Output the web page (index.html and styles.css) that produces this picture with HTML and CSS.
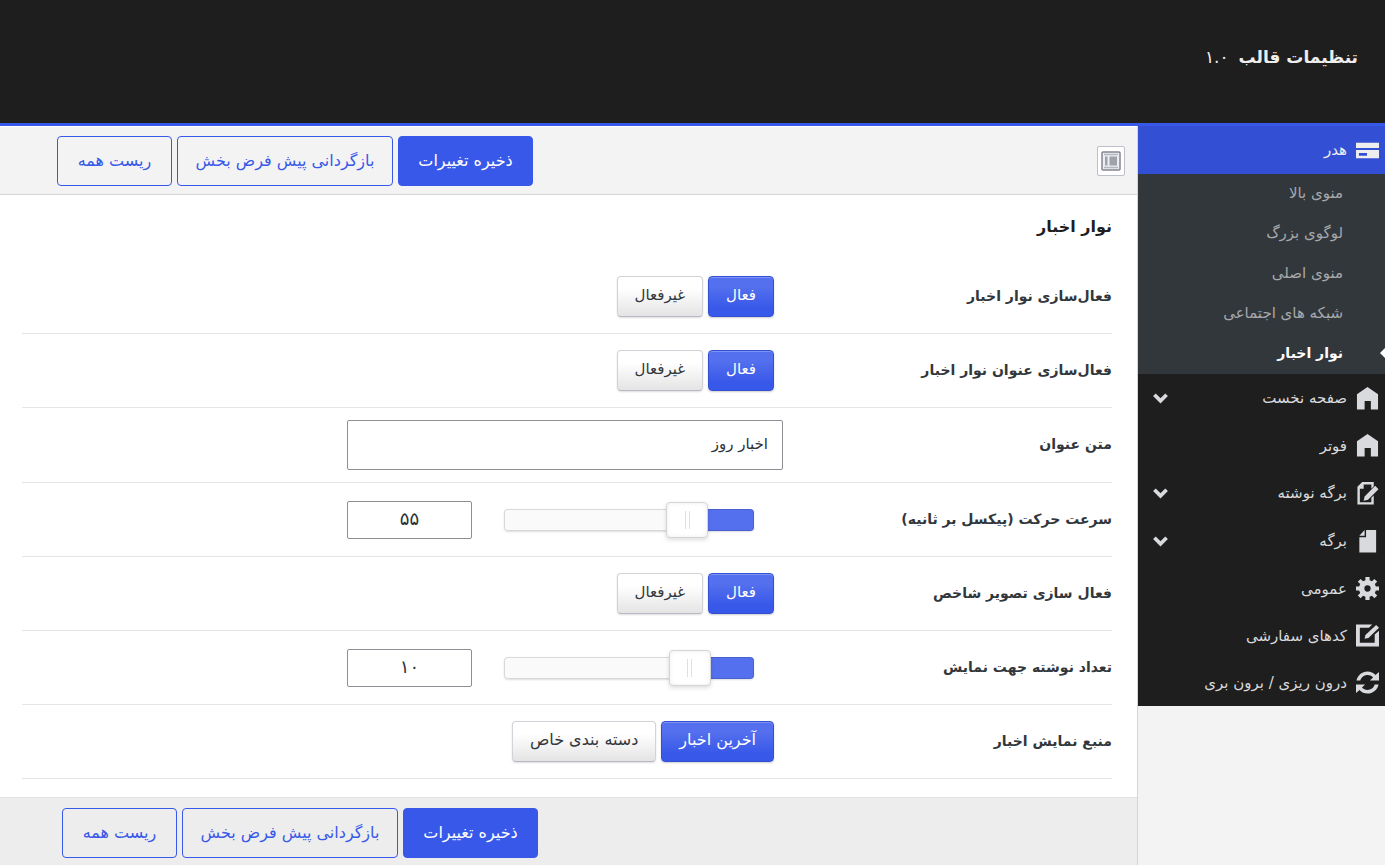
FILE: index.html
```html
<!DOCTYPE html>
<html lang="fa" dir="rtl">
<head>
<meta charset="utf-8">
<meta name="viewport" content="width=device-width, initial-scale=1">
<title>تنظیمات قالب</title>
<link rel="stylesheet" href="styles.css">
</head>
<body>
<header class="page-header">
  <h1 class="page-title">تنظیمات قالب <span class="version">۱.۰</span></h1>
</header>
<div class="layout">
  <nav class="sidebar" aria-label="بخش‌ها">
    <ul class="menu">
      <li>
        <a class="menu-link active" href="#header">
          <svg class="icon" viewBox="0 0 24 24" aria-hidden="true"><path fill-rule="evenodd" d="M0 4h24v5.500H0zM0 11.500h24V20H0zM3 14.500v3h8.500v-3z"/></svg>
          <span>هدر</span>
        </a>
        <ul class="submenu">
          <li><a class="submenu-link" href="#top-menu">منوی بالا</a></li>
          <li><a class="submenu-link" href="#logo">لوگوی بزرگ</a></li>
          <li><a class="submenu-link" href="#main-menu">منوی اصلی</a></li>
          <li><a class="submenu-link" href="#social">شبکه های اجتماعی</a></li>
          <li><a class="submenu-link current" href="#news-bar">نوار اخبار</a></li>
        </ul>
      </li>
      <li>
        <a class="menu-link expandable" href="#home">
          <svg class="icon" viewBox="0 0 24 24" aria-hidden="true"><path d="M12 0l11 7.500V23.500h-7.500V14.500H9v9H1V7.500z"/></svg>
          <span>صفحه نخست</span>
          <svg class="chevron" viewBox="0 0 16 11" aria-hidden="true"><path d="M1.500 1.500L8 8l6.500-6.500"/></svg>
        </a>
      </li>
      <li>
        <a class="menu-link" href="#footer">
          <svg class="icon" viewBox="0 0 24 24" aria-hidden="true"><path d="M12 0l11 7.500V23.500h-7.500V14.500H9v9H1V7.500z"/></svg>
          <span>فوتر</span>
        </a>
      </li>
      <li>
        <a class="menu-link expandable" href="#post">
          <svg class="icon" viewBox="0 0 24 24" aria-hidden="true"><path d="M6.500 0H18.500v4.500l-2.500 2.500V2.500H8V7H4v14h12v-4.500l2.500-2.500v9.500H1.500V5z"/><path d="M20 4l3.500 3.500L12.500 18.500 8 19.500l1-4.500z"/></svg>
          <span>برگه نوشته</span>
          <svg class="chevron" viewBox="0 0 16 11" aria-hidden="true"><path d="M1.500 1.500L8 8l6.500-6.500"/></svg>
        </a>
      </li>
      <li>
        <a class="menu-link expandable" href="#page">
          <svg class="icon" viewBox="0 0 24 24" aria-hidden="true"><path d="M10.500 0H21v23.500H3.500V7.500h7zM9 0v6H3.500z"/></svg>
          <span>برگه</span>
          <svg class="chevron" viewBox="0 0 16 11" aria-hidden="true"><path d="M1.500 1.500L8 8l6.500-6.500"/></svg>
        </a>
      </li>
      <li>
        <a class="menu-link" href="#general">
          <svg class="icon" viewBox="1 1 22 22" aria-hidden="true"><path fill-rule="evenodd" d="M10 1h4v3l2.300 1L18.600 2.800l2.700 2.700L19 7.800l1 2.200h3v4h-3l-1 2.300 2.300 2.300-2.700 2.700L16.300 19 14 20v3h-4v-3l-2.300-1-2.300 2.300-2.700-2.700L5 16.300 4 14H1v-4h3l1-2.200-2.300-2.300 2.700-2.700L7.700 5 10 4zM12 9a3 3 0 1 0 0 6 3 3 0 0 0 0-6z"/></svg>
          <span>عمومی</span>
        </a>
      </li>
      <li>
        <a class="menu-link" href="#custom-code">
          <svg class="icon" viewBox="0 0 24 24" aria-hidden="true"><path d="M0 .5H17L13.500 4H4v15.500h15.500V11L24 7v16.500H0z"/><path d="M21 1l3 3L13 14.500 9 15.500l.8-4z"/></svg>
          <span>کدهای سفارشی</span>
        </a>
      </li>
      <li>
        <a class="menu-link" href="#import-export">
          <svg class="icon" viewBox="0 0 24 24" aria-hidden="true"><path d="M.500 10C1.500 4.500 6.500.5 12 .5c3.300 0 6.300 1.300 8.300 3.700L24 1v9h-9.500l3.300-3.300C16.300 5 14.300 4.300 12 4.300c-3.500 0-6.500 2.200-7.500 5.700zM23.500 14c-1 5.500-6 9.500-11.500 9.500-3.300 0-6.300-1.300-8.300-3.700L0 23v-9h9.500l-3.300 3.300c1.500 1.700 3.500 2.400 5.800 2.400 3.500 0 6.500-2.200 7.500-5.700z"/></svg>
          <span>درون ریزی / برون بری</span>
        </a>
      </li>
    </ul>
  </nav>
  <form class="content">
    <div class="toolbar">
      <button class="expand" type="button" aria-label="نمایش همه">
        <svg viewBox="0 0 20 20" aria-hidden="true"><rect x="1" y="1" width="18" height="18" rx="1" fill="#eceef5" stroke="#85868d" stroke-width="1.500"/><path d="M3 3.500h14M3 16.500h14" stroke="#b5b7c4" stroke-width="1.500"/><path d="M4 5.500h2.500v9H4zM8.500 5.500H16v9H8.500z" fill="#a0a1ab"/></svg>
      </button>
      <div class="actions">
        <button class="button primary" type="submit">ذخیره تغییرات</button>
        <button class="button section-reset" type="button">بازگردانی پیش فرض بخش</button>
        <button class="button" type="reset">ریست همه</button>
      </div>
    </div>
    <main class="panel">
      <h2 class="panel-title">نوار اخبار</h2>
      <div class="row" role="radiogroup" aria-labelledby="l1">
        <span class="row-label" id="l1">فعال‌سازی نوار اخبار</span>
        <div class="choices">
          <label class="choice"><input type="radio" name="bar" checked><span>فعال</span></label>
          <label class="choice"><input type="radio" name="bar"><span>غیرفعال</span></label>
        </div>
      </div>
      <div class="row" role="radiogroup" aria-labelledby="l2">
        <span class="row-label" id="l2">فعال‌سازی عنوان نوار اخبار</span>
        <div class="choices">
          <label class="choice"><input type="radio" name="bar-title" checked><span>فعال</span></label>
          <label class="choice"><input type="radio" name="bar-title"><span>غیرفعال</span></label>
        </div>
      </div>
      <div class="row">
        <label class="row-label" for="title-text">متن عنوان</label>
        <input class="text-input" id="title-text" type="text" value="اخبار روز">
      </div>
      <div class="row">
        <label class="row-label" for="speed">سرعت حرکت (پیکسل بر ثانیه)</label>
        <div class="slider-field">
          <input class="slider" id="speed" type="range" min="0" max="250" value="55" style="--fill: 22%">
          <input class="number-input" type="text" value="۵۵" aria-label="سرعت حرکت">
        </div>
      </div>
      <div class="row" role="radiogroup" aria-labelledby="l5">
        <span class="row-label" id="l5">فعال سازی تصویر شاخص</span>
        <div class="choices">
          <label class="choice"><input type="radio" name="thumb" checked><span>فعال</span></label>
          <label class="choice"><input type="radio" name="thumb"><span>غیرفعال</span></label>
        </div>
      </div>
      <div class="row">
        <label class="row-label" for="count">تعداد نوشته جهت نمایش</label>
        <div class="slider-field">
          <input class="slider" id="count" type="range" min="0" max="48" value="10" style="--fill: 21%">
          <input class="number-input" type="text" value="۱۰" aria-label="تعداد نوشته">
        </div>
      </div>
      <div class="row" role="radiogroup" aria-labelledby="l7">
        <span class="row-label" id="l7">منبع نمایش اخبار</span>
        <div class="choices long">
          <label class="choice"><input type="radio" name="source" checked><span>آخرین اخبار</span></label>
          <label class="choice"><input type="radio" name="source"><span>دسته بندی خاص</span></label>
        </div>
      </div>
    </main>
    <div class="toolbar bottom">
      <div class="actions">
        <button class="button primary" type="submit">ذخیره تغییرات</button>
        <button class="button section-reset" type="button">بازگردانی پیش فرض بخش</button>
        <button class="button" type="reset">ریست همه</button>
      </div>
    </div>
  </form>
</div>
</body>
</html>
```

FILE: styles.css
```css
*,
*::before,
*::after {
  box-sizing: border-box;
}

:root {
  --blue: #3858e9;
  --blue-dark: #3350d4;
  --ink: #32373c;
}

body {
  margin: 0;
  min-height: 100vh;
  display: flex;
  flex-direction: column;
  background: #f3f3f3;
  color: var(--ink);
  font: 15px/20px "DejaVu Sans", sans-serif;
}

button,
input {
  font: inherit;
  margin: 0;
}

ul {
  list-style: none;
  margin: 0;
  padding: 0;
}

a {
  color: inherit;
  text-decoration: none;
}

.page-header {
  padding: 42px 27px 51px;
  background: #1e1e1e;
  border-bottom: 3px solid var(--blue);
}

.page-title {
  margin: 0;
  color: #eee;
  font-size: 17px;
  line-height: 30px;
}

.version {
  margin-inline-start: 4px;
  font-weight: 400;
}

.layout {
  flex: 1;
  display: flex;
}

.sidebar {
  flex: 0 0 247px;
}

.menu {
  background: #1e1e1e;
  color: #d9dadd;
}

.menu-link {
  display: flex;
  align-items: center;
  gap: 9px;
  height: 47px;
  padding: 0 6px 0 15px;
}

.menu-link.expandable {
  height: 48px;
}

.menu-link.active {
  height: 48px;
  background: var(--blue-dark);
  color: #eee;
}

.icon {
  width: 23px;
  height: 23px;
  fill: currentColor;
}

.chevron {
  width: 15px;
  height: 11px;
  margin-inline-start: auto;
  fill: none;
  stroke: currentColor;
  stroke-width: 4;
}

.submenu {
  background: #32373c;
  color: #a6a8ab;
}

.submenu-link {
  display: flex;
  align-items: center;
  height: 40px;
  padding-bottom: 2px;
  padding-inline-start: 42px;
}

.submenu-link.current {
  position: relative;
  color: #fff;
  font-size: 14px;
  font-weight: 700;
}

.submenu-link.current::before {
  content: "";
  position: absolute;
  right: 0;
  width: 5px;
  height: 10px;
  background: #fff;
  clip-path: polygon(100% 0, 100% 100%, 0 50%);
}

.content {
  flex: 1;
  min-width: 0;
  display: flex;
  flex-direction: column;
  background: #fff;
  border-right: 1px solid #d5d5d5;
}

.toolbar {
  display: flex;
  align-items: center;
  padding: 9px 12px 8px 57px;
  background: #f3f3f3;
  border-top: 1px solid #fff;
  border-bottom: 1px solid #d5d5d5;
}

.toolbar.bottom {
  flex: 1;
  padding: 10px 12px 7px 62px;
  background: #ededed;
  border-top-color: #e2e2e2;
  border-bottom: 0;
}

.actions {
  display: flex;
  gap: 5px;
  margin-inline-start: auto;
}

.button {
  min-width: 115px;
  height: 50px;
  padding: 0 16px;
  background: transparent;
  border: 1px solid var(--blue);
  border-radius: 4px;
  color: var(--blue);
  font-size: 16px;
  white-space: nowrap;
}

.button.primary {
  min-width: 135px;
  background: var(--blue);
  color: #fff;
}

.button.section-reset {
  min-width: 216px;
}

.expand {
  display: grid;
  place-items: center;
  width: 28px;
  height: 30px;
  padding: 0;
  background: #fff;
  border: 1px solid #bdbfcc;
  border-radius: 2px;
}

.expand svg {
  width: 20px;
  height: 20px;
}

.panel {
  padding: 17px 25px 18px 22px;
}

.panel-title {
  margin: 0 0 18px;
  color: #1e1e1e;
  font-size: 16px;
  line-height: 30px;
}

.row {
  display: grid;
  grid-template-columns: 30% 40% 1fr;
  column-gap: 2px;
  align-items: center;
  min-height: 74px;
  padding: 12px 0;
  border-bottom: 1px solid #e5e5e5;
}

.row-label {
  padding-bottom: 2px;
  font-size: 14px;
  font-weight: 700;
}

.choices {
  display: flex;
  gap: 5px;
  padding-inline-start: 9px;
}

.choice {
  position: relative;
}

.choice input {
  position: absolute;
  opacity: 0;
}

.choice span {
  display: block;
  padding: 8px 17px 11px;
  background: linear-gradient(#fff 30%, #e4e4e4);
  border: 1px solid #d2d3d8;
  border-bottom-color: #b8b9c6;
  border-radius: 4px;
  box-shadow: 0 1px 2px #0002;
  white-space: nowrap;
}

.choices.long span {
  padding-inline: 17px;
  font-size: 16px;
}

.choice input:checked + span {
  background: linear-gradient(#5470ee 25%, #3858e9 80%);
  border-color: #3350d4;
  box-shadow: inset 0 1px #7d93f3, 0 1px 2px #0003;
  color: #fff;
}

.choice input:focus-visible + span {
  outline: 2px solid var(--blue);
  outline-offset: 1px;
}

.text-input,
.number-input {
  background: #fff;
  border: 1px solid #8c8f94;
  border-radius: 2px;
  color: #2c3338;
}

.text-input {
  width: 100%;
  height: 50px;
  padding: 0 14px 2px;
}

.number-input {
  width: 125px;
  height: 38px;
  padding: 0 8px 2px;
  font-size: 18px;
  text-align: center;
}

.slider-field {
  display: flex;
  align-items: center;
  justify-content: flex-end;
  gap: 32px;
}

.slider {
  appearance: none;
  width: 250px;
  height: 36px;
  background: transparent;
}

.slider::-webkit-slider-runnable-track {
  height: 22px;
  background: linear-gradient(to left, #5470ee var(--fill), #fafafa var(--fill));
  border-radius: 4px;
  box-shadow: inset 0 0 0 1px #0002, 0 1px 2px #0002;
}

.slider::-webkit-slider-thumb {
  appearance: none;
  width: 42px;
  height: 36px;
  margin-top: -7px;
  background:
    linear-gradient(90deg, #e0e0e0 1px, transparent 1px 4px, #e0e0e0 4px) center / 5px 18px no-repeat,
    #fff;
  border: 1px solid #d5d5d5;
  border-radius: 4px;
  box-shadow: inset 0 0 5px #0001, 0 2px 4px #0002;
}
```
